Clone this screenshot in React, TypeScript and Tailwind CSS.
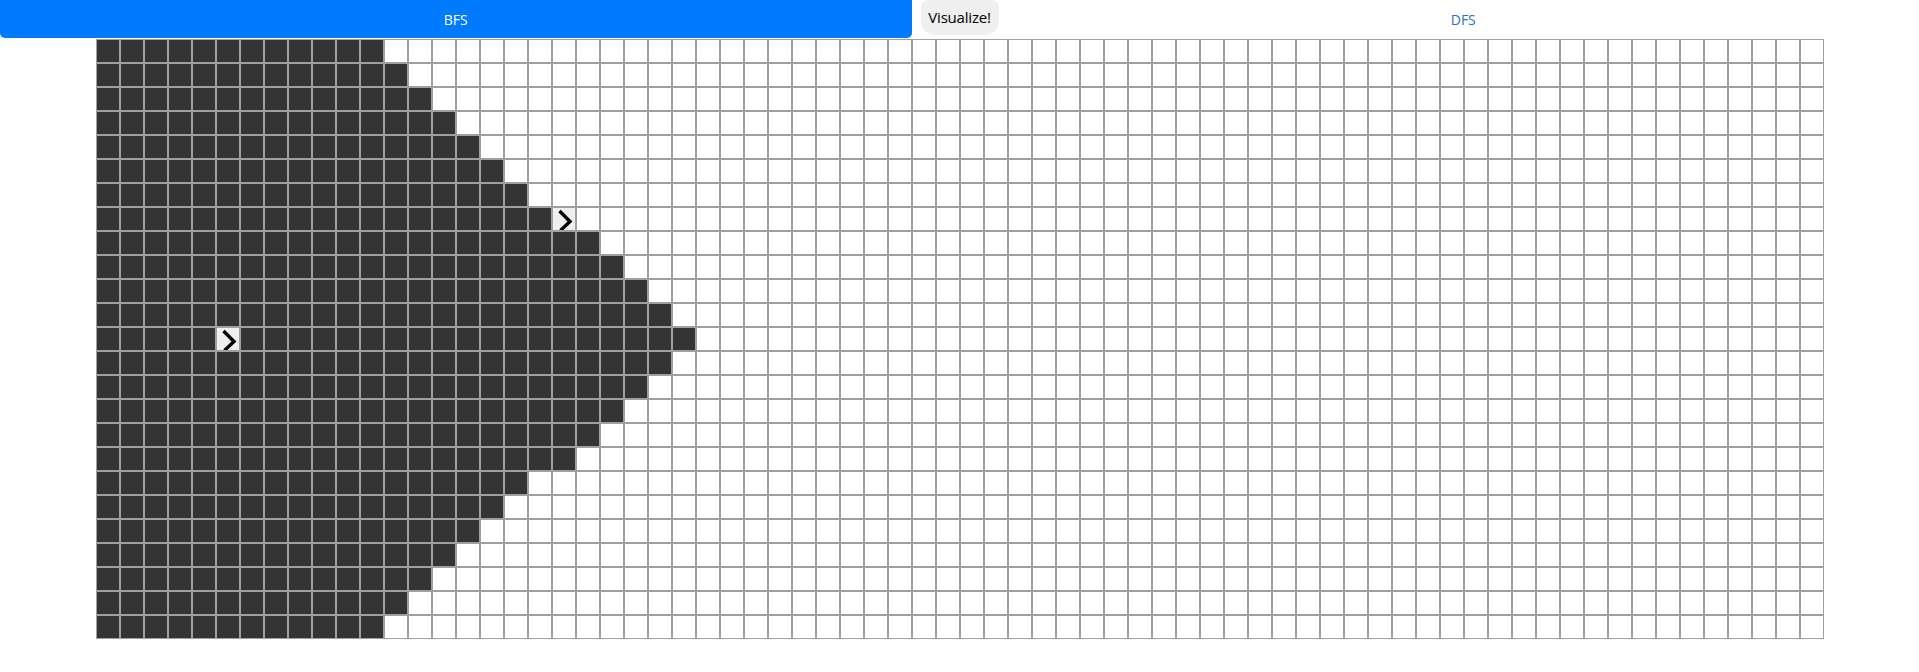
import React from 'react';

const ROWS = 25;
const COLS = 72;
const START = { r: 12, c: 5 };
const TARGET = { r: 7, c: 19 };

// how many cells from the left are visited on each row
const visited = [12, 13, 14, 15, 16, 17, 18, 19, 21, 22, 23, 24, 25, 24, 23, 22, 21, 20, 18, 17, 16, 15, 14, 13, 12];

function Chevron() {
  return (
    <svg viewBox="0 0 22 22" className="w-[22px] h-[22px]">
      <polyline points="6.5,3 17,13.5 7.5,22.5" fill="none" stroke="#000" strokeWidth="3.4" strokeLinejoin="miter" />
    </svg>
  );
}

function Cell({ r, c }: { r: number; c: number }) {
  const isNode = (r === START.r && c === START.c) || (r === TARGET.r && c === TARGET.c);
  const isVisited = c < visited[r];
  let bg = 'bg-white';
  if (isVisited) bg = 'bg-[#343434]';
  if (isNode) bg = 'bg-[#efefef]';
  return (
    <div className={`w-6 h-6 border border-[#a0a0a0] ${bg} flex items-center justify-center overflow-hidden`}>
      {isNode && <Chevron />}
    </div>
  );
}

export default function App() {
  return (
    <div className="min-h-[672px] bg-white font-['Open_Sans','Noto_Sans',sans-serif]">
      {/* algorithm buttons */}
      <div className="flex items-start h-[39px]">
        <button className="flex-1 h-[38px] bg-[#007bff] text-white text-[14px] rounded-b-[5px]">BFS</button>
        <button className="mx-[9px] w-[78px] h-[35px] bg-[#efefef] text-black text-[15px] tracking-[-0.2px] rounded-b-[14px] rounded-t-[8px]">
          Visualize!
        </button>
        <button className="flex-1 h-[38px] text-[#2a72cc] text-[14px]">DFS</button>
      </div>

      {/* board */}
      <div className="w-fit mx-auto">
        {Array.from({ length: ROWS }).map((_, r) => (
          <div key={r} className="flex">
            {Array.from({ length: COLS }).map((_, c) => (
              <Cell key={c} r={r} c={c} />
            ))}
          </div>
        ))}
      </div>
    </div>
  );
}
